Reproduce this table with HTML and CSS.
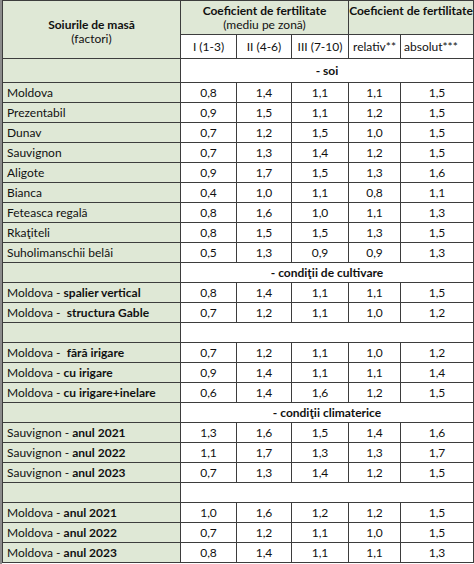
FILE: index.html
```html
<!DOCTYPE html>
<html lang="ro">
<head>
    <meta charset="UTF-8">
    <title>Coeficient de fertilitate</title>
    <link rel="stylesheet" href="styles.css">
</head>
<body>
<div class="sheet">
    <table class="fert">
        <colgroup>
            <col class="c-name">
            <col class="c-z1">
            <col class="c-z2">
            <col class="c-z3">
            <col class="c-rel">
            <col class="c-abs">
        </colgroup>
        <thead>
            <tr class="h1">
                <th class="name-head" rowspan="2"><b>Soiurile de masă</b><br><span>(factori)</span></th>
                <th class="green top" colspan="3"><b>Coeficient de fertilitate</b><br><span>(mediu pe zonă)</span></th>
                <th class="green top" colspan="2"><b>Coeficient de fertilitate</b></th>
            </tr>
            <tr class="h2">
                <th>I (1-3)</th>
                <th>II (4-6)</th>
                <th>III (7-10)</th>
                <th>relativ**</th>
                <th class="left">absolut***</th>
            </tr>
        </thead>
        <tbody>
            <tr class="section first"><td class="name"></td><td colspan="5">- soi</td></tr>
            <tr><td class="name">Moldova</td><td>0,8</td><td>1,4</td><td>1,1</td><td>1,1</td><td>1,5</td></tr>
            <tr><td class="name">Prezentabil</td><td>0,9</td><td>1,5</td><td>1,1</td><td>1,2</td><td>1,5</td></tr>
            <tr><td class="name">Dunav</td><td>0,7</td><td>1,2</td><td>1,5</td><td>1,0</td><td>1,5</td></tr>
            <tr><td class="name">Sauvignon</td><td>0,7</td><td>1,3</td><td>1,4</td><td>1,2</td><td>1,5</td></tr>
            <tr><td class="name">Aligote</td><td>0,9</td><td>1,7</td><td>1,5</td><td>1,3</td><td>1,6</td></tr>
            <tr><td class="name">Bianca</td><td>0,4</td><td>1,0</td><td>1,1</td><td>0,8</td><td>1,1</td></tr>
            <tr><td class="name">Feteasca regală</td><td>0,8</td><td>1,6</td><td>1,0</td><td>1,1</td><td>1,3</td></tr>
            <tr><td class="name">Rkaţiteli</td><td>0,8</td><td>1,5</td><td>1,5</td><td>1,3</td><td>1,5</td></tr>
            <tr><td class="name">Suholimanschii belâi</td><td>0,5</td><td>1,3</td><td>0,9</td><td>0,9</td><td>1,3</td></tr>

            <tr class="section"><td class="name"></td><td colspan="5">- condiţii de cultivare</td></tr>
            <tr><td class="name">Moldova - <b>spalier vertical</b></td><td>0,8</td><td>1,4</td><td>1,1</td><td>1,1</td><td>1,5</td></tr>
            <tr><td class="name">Moldova - &nbsp;<b>structura Gable</b></td><td>0,7</td><td>1,2</td><td>1,1</td><td>1,0</td><td>1,2</td></tr>
            <tr class="blank"><td class="name"></td><td colspan="5"></td></tr>
            <tr><td class="name">Moldova - &nbsp;<b>fără irigare</b></td><td>0,7</td><td>1,2</td><td>1,1</td><td>1,0</td><td>1,2</td></tr>
            <tr><td class="name">Moldova - <b>cu irigare</b></td><td>0,9</td><td>1,4</td><td>1,1</td><td>1,1</td><td>1,4</td></tr>
            <tr><td class="name">Moldova - <b>cu irigare+inelare</b></td><td>0,6</td><td>1,4</td><td>1,6</td><td>1,2</td><td>1,5</td></tr>

            <tr class="section"><td class="name"></td><td colspan="5">- condiţii climaterice</td></tr>
            <tr><td class="name">Sauvignon - <b>anul 2021</b></td><td>1,3</td><td>1,6</td><td>1,5</td><td>1,4</td><td>1,6</td></tr>
            <tr><td class="name">Sauvignon - <b>anul 2022</b></td><td>1,1</td><td>1,7</td><td>1,3</td><td>1,3</td><td>1,7</td></tr>
            <tr><td class="name">Sauvignon - <b>anul 2023</b></td><td>0,7</td><td>1,3</td><td>1,4</td><td>1,2</td><td>1,5</td></tr>
            <tr class="blank"><td class="name"></td><td colspan="5"></td></tr>
            <tr><td class="name">Moldova - <b>anul 2021</b></td><td>1,0</td><td>1,6</td><td>1,2</td><td>1,2</td><td>1,5</td></tr>
            <tr><td class="name">Moldova - <b>anul 2022</b></td><td>0,7</td><td>1,2</td><td>1,1</td><td>1,0</td><td>1,5</td></tr>
            <tr><td class="name">Moldova - <b>anul 2023</b></td><td>0,8</td><td>1,4</td><td>1,1</td><td>1,1</td><td>1,3</td></tr>
        </tbody>
    </table>
</div>
</body>
</html>
```

FILE: styles.css
```css
html, body {
    margin: 0;
    background: #ffffff;
}

body {
    font-family: Lato, "Open Sans", sans-serif;
    font-size: 12px;
    color: #111111;
}

.sheet {
    border-left: 2px solid #8c8c8c;
    width: 472px;
    height: 564px;
    overflow: hidden;
}

.fert {
    border-collapse: collapse;
    table-layout: fixed;
    width: 471px;
}

.c-name { width: 178px; }
.c-z1 { width: 56px; }
.c-z2 { width: 55px; }
.c-z3 { width: 57px; }
.c-rel { width: 52px; }
.c-abs { width: 73px; }

.fert th,
.fert td {
    border: 1px solid #3d3d3d;
    padding: 0;
    text-align: center;
    font-weight: normal;
    line-height: 14px;
    white-space: nowrap;
}

.fert b {
    font-weight: bold;
}

.fert tr {
    height: 20px;
}

.fert tr.h1 {
    height: 34px;
}

.fert tr.h2,
.fert tr.first {
    height: 24px;
}

.top {
    vertical-align: top;
    padding-top: 3px !important;
}

.green,
.name-head,
.fert td.name {
    background: #dfe8d6;
}

.name-head {
    padding-top: 4px !important;
}

.h2 th.left {
    text-align: left;
    padding-left: 3px;
}

.fert td.name {
    text-align: left;
    padding-left: 4px;
}

.section td {
    font-weight: bold;
}

.blank td:last-child {
    border-left: 1px solid #3d3d3d;
}
```
